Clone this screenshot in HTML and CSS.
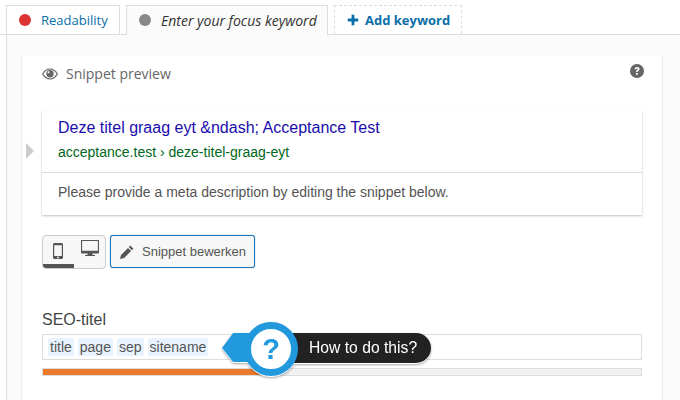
FILE: index.html
```html
<!DOCTYPE html>
<html lang="en">
<head>
<meta charset="utf-8">
<title>Snippet preview</title>
<link rel="stylesheet" href="styles.css">
</head>
<body>
<nav class="tabs">
  <div class="tab tab-read"><span class="dot dot-red"></span><span>Readability</span></div>
  <div class="tab tab-active"><span class="dot dot-gray"></span><em>Enter your focus keyword</em></div>
  <div class="tab tab-add">
    <svg class="plus" viewBox="0 0 12 12" width="12" height="12"><path d="M4.600 0.800h2.800v3.800h3.800v2.800H7.400v3.800H4.600V7.400H0.800V4.600h3.800z" fill="#0a6fa8"/></svg>
    <span>Add keyword</span>
  </div>
</nav>
<main class="panel">
  <section class="card">
    <header class="card-head">
      <svg class="eye" viewBox="0 0 16 12" width="16" height="12"><path fill="#666" d="M0 6C2 2.200 5 .5 8 .5s6 1.700 8 5.500c-2 3.800-5 5.500-8 5.500S2 9.800 0 6z"/><path fill="#fff" d="M1.400 6C3 3.400 5.300 1.600 8 1.600S13 3.400 14.600 6C13 8.600 10.700 10.400 8 10.400S3 8.600 1.400 6z"/><circle cx="8" cy="5.700" r="3.700" fill="#666"/><circle cx="6.500" cy="4.200" r="1" fill="#fff"/></svg>
      <span class="card-title">Snippet preview</span>
      <svg class="help" viewBox="0 0 14 14" width="14" height="14"><circle cx="7" cy="7" r="7" fill="#666"/><path d="M4.500 5.300C4.600 3.900 5.700 3 7.100 3c1.500 0 2.500.9 2.500 2.100 0 1.900-1.900 1.900-1.900 3H6c0-2 1.800-2.100 1.800-3 0-.4-.3-.7-.8-.7-.5 0-.8.300-.9.900zM6 9h1.800v1.800H6z" fill="#fff"/></svg>
    </header>
    <div class="preview-row">
      <span class="caret"></span>
      <div class="snippet">
        <div class="snippet-top">
          <div class="snippet-title">Deze titel graag eyt &amp;ndash; Acceptance Test</div>
          <div class="snippet-url">acceptance.test › deze-titel-graag-eyt</div>
        </div>
        <div class="snippet-desc">Please provide a meta description by editing the snippet below.</div>
      </div>
    </div>
    <div class="controls">
      <div class="modes">
        <div class="mode mode-on">
          <svg viewBox="0 0 10 16" width="10" height="16"><path fill="#555" fill-rule="evenodd" d="M1.500 0h7C9.300 0 10 .7 10 1.500v13c0 .8-.7 1.500-1.500 1.500h-7C.7 16 0 15.300 0 14.500v-13C0 .7.700 0 1.500 0zM1.200 2.200v10.800h7.600V2.200zM5 13.600a.9.900 0 1 0 0 1.800.9.900 0 0 0 0-1.800z"/></svg>
        </div>
        <div class="mode">
          <svg viewBox="0 0 18 17" width="18" height="17"><path fill="#555" fill-rule="evenodd" d="M1 0h16c.6 0 1 .4 1 1v11.500c0 .6-.4 1-1 1h-5.500v1.500H14v1H4v-1h2.500v-1.500H1c-.6 0-1-.4-1-1V1c0-.6.400-1 1-1zm.1 1.100v9.700h15.800V1.100z"/></svg>
        </div>
      </div>
      <button class="edit-btn" type="button">
        <svg viewBox="0 0 14 14" width="14" height="14"><path fill="#555" d="M10.300.6l3.100 3.100-1.500 1.500-3.100-3.100zM8 2.900L11.100 6l-7 7L0 14l1-4.100z"/></svg>
        <span>Snippet bewerken</span>
      </button>
    </div>
    <div class="field">
      <label class="field-label">SEO-titel</label>
      <div class="field-input">
        <span class="tag">title</span><span class="tag">page</span><span class="tag">sep</span><span class="tag">sitename</span>
      </div>
      <div class="meter"><div class="meter-fill" style="width:38%"></div></div>
      <div class="hint">
        <span class="hint-arrow"></span>
        <span class="hint-pill">How to do this?</span>
        <span class="hint-pin"><span class="hint-q">?</span></span>
      </div>
    </div>
  </section>
</main>
</body>
</html>
```
FILE: styles.css
```css
* { box-sizing: border-box; }
html, body { height: 100%; }
body {
  margin: 0;
  height: 400px;
  overflow: hidden;
  background: #fff;
  font-family: "Liberation Sans", Arial, sans-serif;
  color: #444;
}
.tabs {
  display: flex;
  gap: 6px;
  height: 35px;
  padding: 5px 0 0 6px;
  border-bottom: 1px solid #ddd;
  font-family: "Open Sans", sans-serif;
  font-size: 13px;
}
.tab {
  display: flex;
  align-items: center;
  height: 30px;
  border: 1px solid #ddd;
  border-bottom: 0;
}
.tab-read { width: 114px; padding: 0 0 1px 12px; height: 29px; color: #0a6fa8; background: #fff; }
.tab-active { width: 202px; padding: 0 0 1px 12px; background: #fbfbfb; color: #333; position: relative; z-index: 1; }
.tab-active em { font-style: italic; font-size: 14px; }
.tab-add {
  width: 128px;
  height: 29px;
  padding: 0 0 1px 12px;
  border: 1px dashed #ddd;
  border-bottom: 0;
  color: #0a6fa8;
  font-weight: 700;
  gap: 6px;
}
.dot { width: 12px; height: 12px; border-radius: 50%; margin-right: 10px; flex: none; }
.dot-red { background: #dc3232; }
.dot-gray { background: #888; }
.panel {
  margin-left: 6px;
  margin-top: -1px;
  height: 366px;
  padding: 20px 18px 0 15px;
  overflow: hidden;
  background: #fbfbfb;
  border-left: 1px solid #ddd;
  border-top: 1px solid #ddd;
}
.card {
  height: 345px;
  padding: 0 20px;
  background: #fff;
  box-shadow: 0 1px 2px rgba(0,0,0,.2);
}
.card-head {
  display: flex;
  align-items: center;
  height: 55px;
  padding-bottom: 18px;
  font-family: "Open Sans", sans-serif;
  font-size: 14px;
  color: #646464;
}
.eye { margin-right: 8px; }
.card-title { flex: 1; }
.help { margin: -6px -2px 0 0; }
.preview-row { position: relative; }
.caret {
  position: absolute;
  left: -16px;
  top: 33px;
  border-left: 8px solid #ccc;
  border-top: 8px solid transparent;
  border-bottom: 8px solid transparent;
}
.snippet {
  height: 105px;
  background: #fff;
  box-shadow: 0 1px 2px rgba(0,0,0,.25);
}
.snippet-top {
  height: 63px;
  padding: 8px 16px 0;
  border-bottom: 1px solid #ddd;
}
.snippet-title { font-size: 16px; line-height: 19px; color: #1a0dab; }
.snippet-url { margin-top: 7px; font-size: 14px; line-height: 16px; color: #006621; }
.snippet-desc { padding: 11px 16px 0; font-size: 14px; line-height: 16px; color: #545454; }
.controls { display: flex; gap: 4px; margin-top: 20px; }
.modes {
  display: flex;
  width: 64px;
  height: 34px;
  background: #f7f7f7;
  border: 1px solid #ccc;
  border-radius: 4px;
  overflow: hidden;
}
.mode { width: 32px; display: flex; justify-content: center; padding-top: 7px; }
.mode:last-child { padding-top: 4px; padding-left: 1px; }
.mode-on { border-bottom: 4px solid #555; }
.edit-btn {
  display: flex;
  align-items: center;
  gap: 8px;
  width: 145px;
  height: 33px;
  padding: 0 0 0 9px;
  background: #f7f7f7;
  border: 1px solid #1c74bb;
  border-radius: 3px;
  box-shadow: 0 0 1px #1c74bb;
  font-family: inherit;
  font-size: 13px;
  color: #555;
}
.field { position: relative; margin-top: 42px; }
.field-label { display: block; font-size: 16px; line-height: 18px; color: #444; }
.field-input {
  display: flex;
  gap: 4px;
  align-items: center;
  height: 26px;
  margin-top: 5px;
  padding-left: 5px;
  border: 1px solid #ddd;
  background: #fff;
}
.tag {
  height: 18px;
  padding: 0 2px;
  background: #e8f3fd;
  border-radius: 2px;
  font-size: 14px;
  line-height: 18px;
  color: #555;
}
.meter {
  height: 8px;
  margin-top: 8px;
  background: #f1f1f1;
  border: 1px solid #ddd;
}
.meter-fill { height: 100%; background: #ec7a2d; }
.hint {
  position: absolute;
  left: 180px;
  top: 22px;
  width: 210px;
  height: 56px;
  filter: drop-shadow(0 1px 0 #fff) drop-shadow(0 1px 1px rgba(0,0,0,.35));
}
.hint-arrow {
  position: absolute;
  left: 0;
  top: 0;
  width: 40px;
  height: 29px;
  background: #2299dd;
  clip-path: polygon(0 52%, 28% 0, 100% 0, 100% 100%, 28% 100%);
}
.hint-pill {
  position: absolute;
  left: 40px;
  top: 0;
  width: 169px;
  height: 30px;
  padding-left: 47px;
  background: #222;
  border-radius: 0 15px 15px 0;
  font-size: 15.700px;
  line-height: 30px;
  color: #fff;
  white-space: nowrap;
}
.hint-pin {
  position: absolute;
  left: 22px;
  top: -11px;
  width: 54px;
  height: 54px;
  display: flex;
  align-items: center;
  justify-content: center;
  background: #fff;
  border: 7px solid #2299dd;
  border-radius: 50%;
}
.hint-q { font-size: 29px; font-weight: 700; color: #2299dd; line-height: 1; }
```
